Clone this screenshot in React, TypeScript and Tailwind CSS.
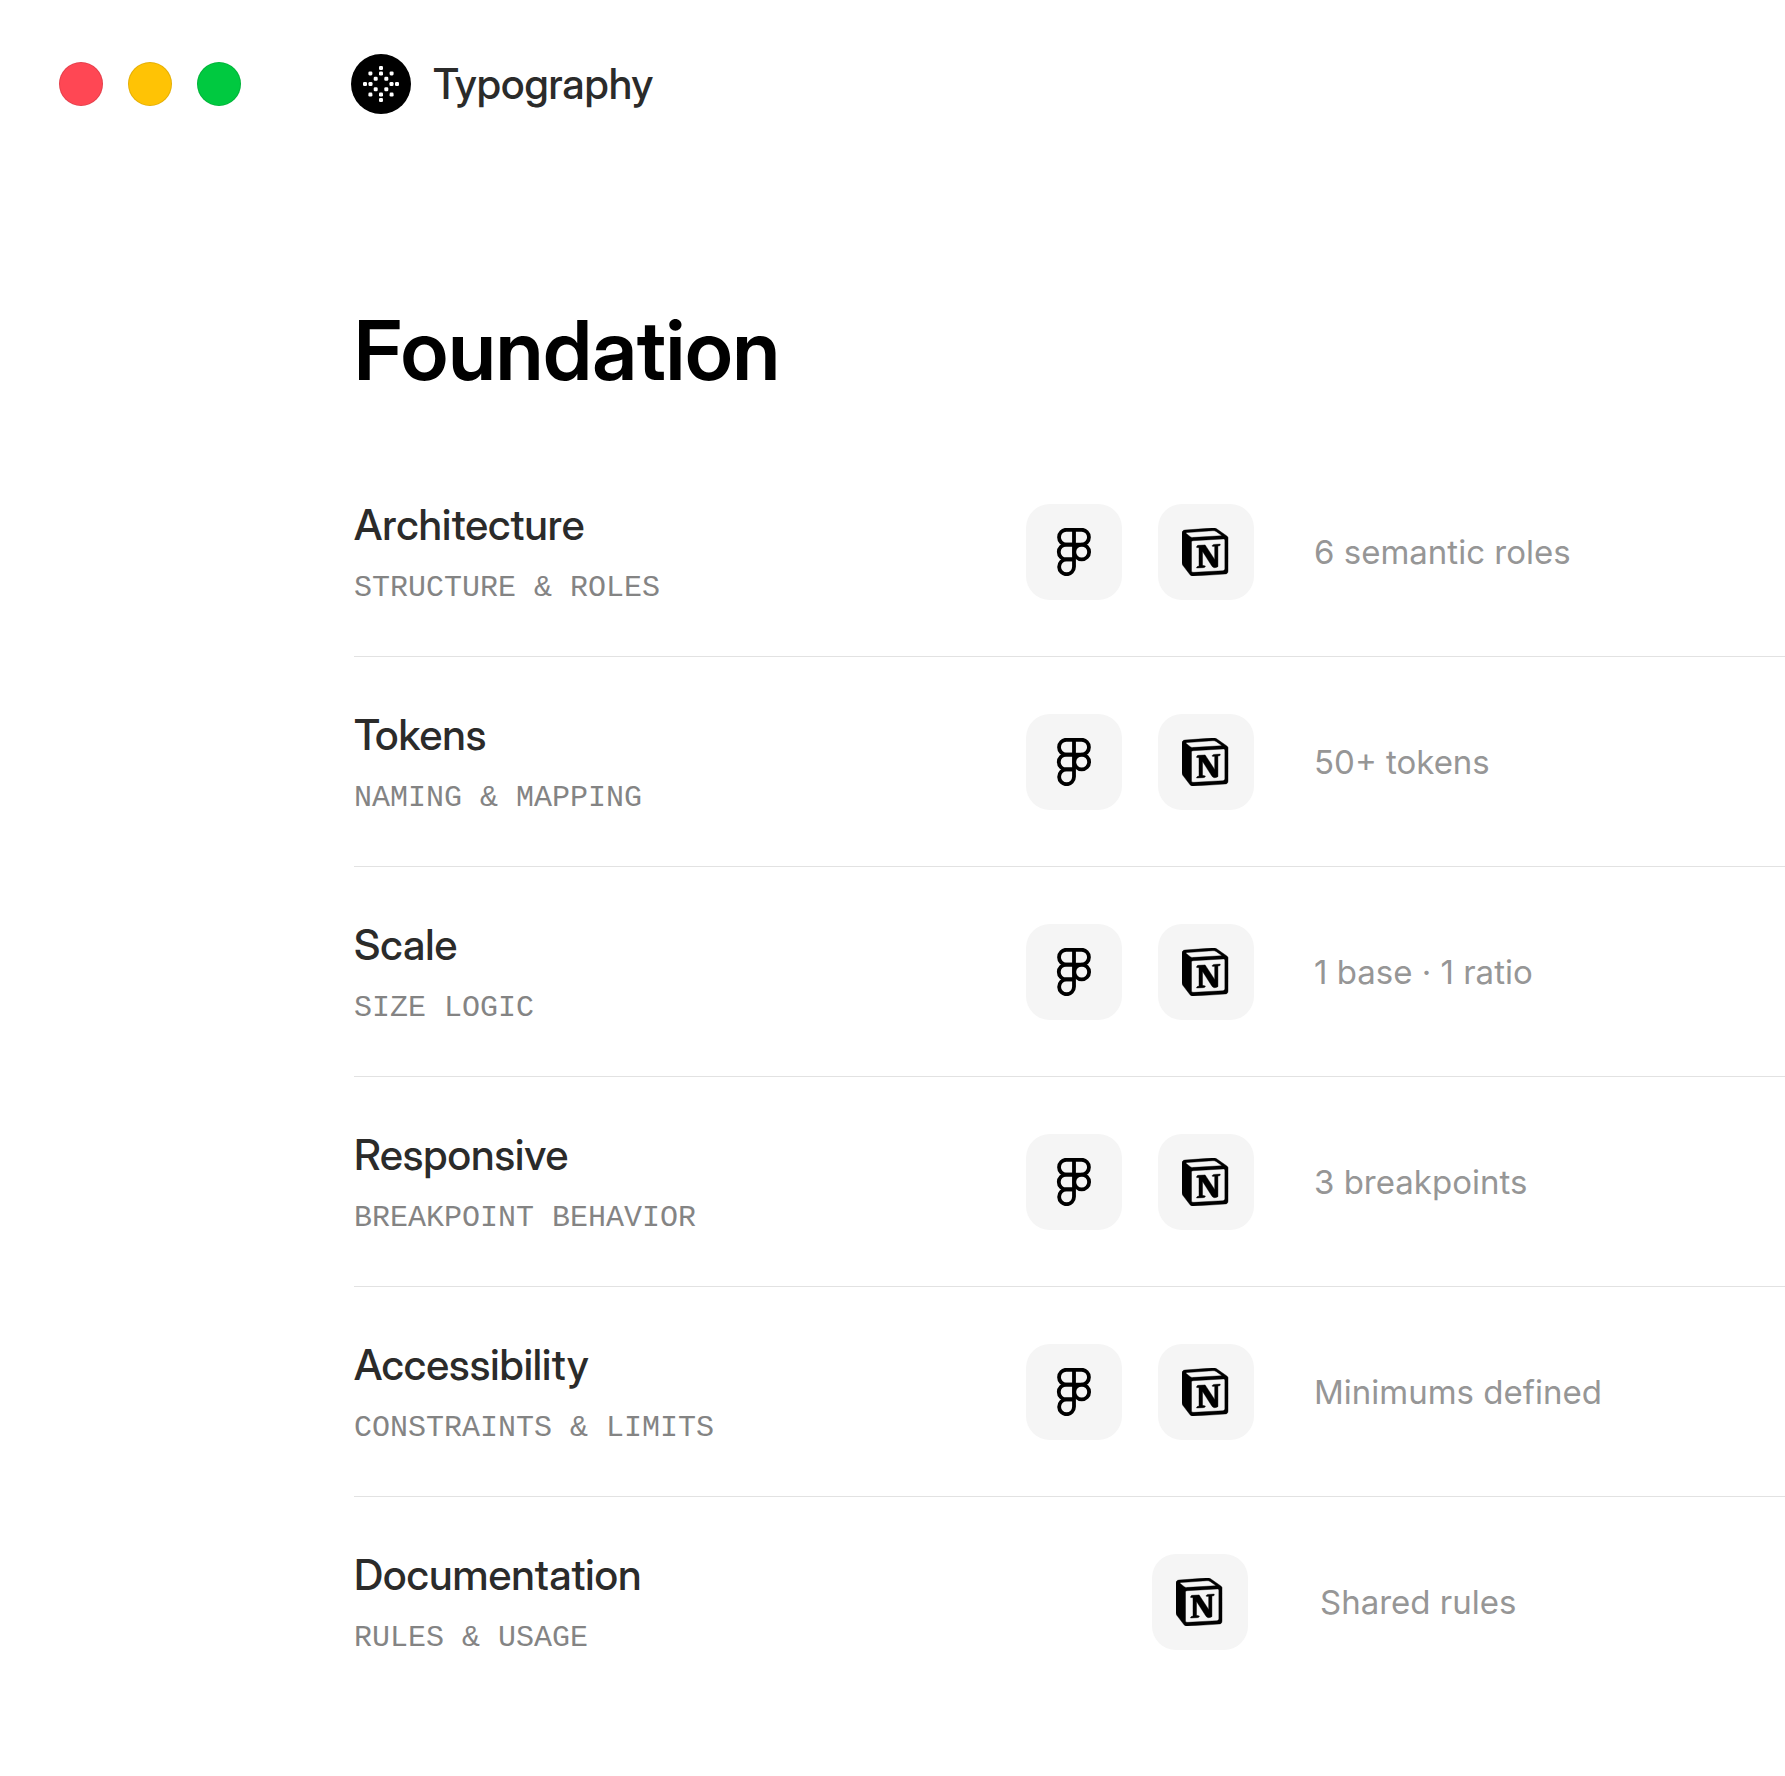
import { SiNotion } from "react-icons/si";

type Tool = "figma" | "notion";

interface Row {
  title: string;
  caption: string;
  note: string;
  tools: Tool[];
}

const rows: Row[] = [
  { title: "Architecture", caption: "STRUCTURE & ROLES", note: "6 semantic roles", tools: ["figma", "notion"] },
  { title: "Tokens", caption: "NAMING & MAPPING", note: "50+ tokens", tools: ["figma", "notion"] },
  { title: "Scale", caption: "SIZE LOGIC", note: "1 base · 1 ratio", tools: ["figma", "notion"] },
  { title: "Responsive", caption: "BREAKPOINT BEHAVIOR", note: "3 breakpoints", tools: ["figma", "notion"] },
  { title: "Accessibility", caption: "CONSTRAINTS & LIMITS", note: "Minimums defined", tools: ["figma", "notion"] },
  { title: "Documentation", caption: "RULES & USAGE", note: "Shared rules", tools: ["notion"] },
];

const logoDots: [number, number][] = [
  [0, -16], [0, -10.5], [0, 10.5], [0, 16],
  [-16, 0], [-10.5, 0], [10.5, 0], [16, 0],
  [-5.3, -5.3], [5.3, -5.3], [-5.3, 5.3], [5.3, 5.3],
  [-10.6, -10.6], [10.6, -10.6], [-10.6, 10.6], [10.6, 10.6],
];

function Logo() {
  return (
    <svg viewBox="-30 -30 60 60" className="size-15 shrink-0" aria-hidden="true">
      <circle r="30" fill="#000" />
      {logoDots.map(([x, y]) => (
        <rect key={`${x},${y}`} x={x - 2} y={y - 2} width="4" height="4" rx="1.3" fill="#fff" />
      ))}
    </svg>
  );
}

function FigmaIcon() {
  return (
    <svg viewBox="0 0 48 48" className="size-12" fill="none" stroke="currentColor" strokeWidth="3.8" aria-hidden="true">
      <path d="M16.2 1.75h15.6a7.42 7.42 0 0 1 0 14.83H16.2a7.42 7.42 0 0 1 0-14.83Z" />
      <path d="M24 16.58h-7.8a7.42 7.42 0 0 0 0 14.84H24" />
      <path d="M24 31.42h-7.8a7.42 7.42 0 1 0 7.8 7.42V1.75" />
      <circle cx="31.7" cy="24" r="7.42" />
    </svg>
  );
}

function ToolButton({ tool }: { tool: Tool }) {
  return (
    <button
      type="button"
      aria-label={tool === "figma" ? "Open in Figma" : "Open in Notion"}
      className="flex size-24 shrink-0 items-center justify-center rounded-3xl bg-neutral-100 text-black"
    >
      {tool === "figma" ? (
        <FigmaIcon />
      ) : (
        <SiNotion viewBox="0.5 0 24 24" className="size-12" stroke="currentColor" strokeWidth="0.2" />
      )}
    </button>
  );
}

function WindowButton({ label, color }: { label: string; color: string }) {
  return <button type="button" aria-label={label} className={`size-11 rounded-full border border-black/10 ${color}`} />;
}

export default function App() {
  return (
    <div className="min-h-screen overflow-hidden bg-white font-['Inter',sans-serif] text-[#2b2b2a]">
      <header className="flex items-center pt-[54px] pl-[59px]">
        <div className="flex gap-[25px]">
          <WindowButton label="Close" color="bg-[#ff4754]" />
          <WindowButton label="Minimize" color="bg-[#ffc305]" />
          <WindowButton label="Zoom" color="bg-[#00c940]" />
        </div>
        <div className="ml-[110px] flex items-center gap-[22px]">
          <Logo />
          <span className="font-['Inter_Display','Inter',sans-serif] text-[42px] leading-12 font-medium">Typography</span>
        </div>
      </header>
      <main className="pt-[184px] pl-[354px]">
        <h1 className="font-['Inter_Display','Inter',sans-serif] text-[83px] leading-[104px] font-semibold text-black">
          Foundation
        </h1>
        <ul className="mt-[45px]">
          {rows.map((row) => (
            <li key={row.title} className="flex h-[210px] items-center border-b border-[#e2e2e2] last:border-transparent">
              <div className={`pt-2.5 ${row.tools.length > 1 ? "w-[672px]" : "w-[798px]"}`}>
                <h2 className="font-['Inter_Display','Inter',sans-serif] text-[42px] leading-12 font-medium">{row.title}</h2>
                <p className="mt-[15px] font-['Liberation_Mono',monospace] text-[30px] leading-12 text-[#848484]">{row.caption}</p>
              </div>
              <div className={`flex ${row.tools.length > 1 ? "gap-9 pr-15" : "pr-18"}`}>
                {row.tools.map((tool) => (
                  <ToolButton key={tool} tool={tool} />
                ))}
              </div>
              <p className="text-[33px] leading-12 text-[#969696]">{row.note}</p>
            </li>
          ))}
        </ul>
      </main>
    </div>
  );
}
